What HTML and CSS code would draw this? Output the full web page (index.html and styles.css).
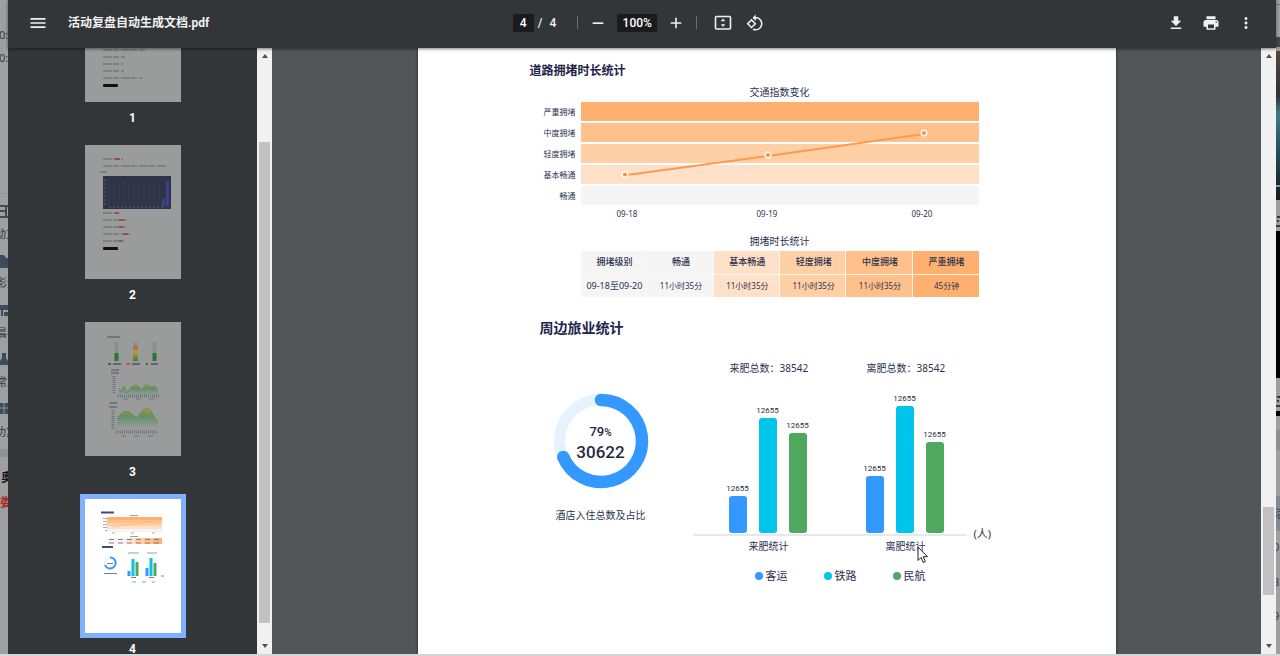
FILE: index.html
```html
<!DOCTYPE html>
<html lang="zh-CN">
<head>
    <meta charset="UTF-8">
    <meta name="viewport" content="width=device-width, initial-scale=1.0">
    <title>活动复盘自动生成文档.pdf</title>
    <link rel="stylesheet" href="styles.css">
</head>
<body>
    <!-- page behind the viewer, left edge -->
    <div class="edge edge-left">
        <svg width="8" height="656" viewBox="0 0 8 656">
            <g class="edge-text">
                <text x="-1" y="39">0:</text>
                <text x="-1" y="62">0:</text>
                <text x="-5" y="238">动文</text>
                <text x="-4" y="287">影沟</text>
                <text x="-4" y="337">晨模</text>
                <text x="-4" y="386">常重</text>
                <text x="-5" y="436">功复</text>
            </g>
            <rect y="193" width="8" height="1" fill="#959595"/>
            <path d="M0 206h8M0 211h7M0 217h8M6 206v11" stroke="#3d4c5c" stroke-width="2" fill="none"/>
            <path d="M0 255h4l2 3h2v10H0z" fill="#3d4c5c"/>
            <path d="M0 305h8v5H0zM1 310h2v6H1zM4 312h4v4H4z" fill="#3d4c5c"/>
            <path d="M2 353h4v5l2 3v4H0v-4l2-3z" fill="#3d4c5c"/>
            <path d="M0 403h8v11H0z" fill="#3d4c5c"/>
            <path d="M0 408h8M4 403v11" stroke="#8b9197"/>
            <rect y="449" width="8" height="8" fill="#8e9196"/>
            <text class="edge-name" x="1" y="482">奥</text>
            <text class="edge-alert" x="0" y="507">娄</text>
        </svg>
    </div>

    <div class="viewer">
        <header class="toolbar">
            <div class="toolbar-start">
                <button class="icon-button" aria-label="菜单">
                    <svg width="20" height="20" viewBox="0 0 24 24"><path d="M3 18h18v-2H3zm0-5h18v-2H3zm0-7v2h18V6z"/></svg>
                </button>
                <h1>活动复盘自动生成文档.pdf</h1>
            </div>
            <div class="toolbar-center">
                <input class="page-input" type="text" value="4" aria-label="页码">
                <span class="slash">/</span>
                <span>4</span>
                <span class="divider"></span>
                <button class="icon-button" aria-label="缩小">
                    <svg width="16" height="16" viewBox="0 0 24 24"><path d="M4 11h16v2.500H4z"/></svg>
                </button>
                <input class="zoom-input" type="text" value="100%" aria-label="缩放">
                <button class="icon-button" aria-label="放大">
                    <svg width="16" height="16" viewBox="0 0 24 24"><path d="M20 13.200h-6.800V20h-2.400v-6.800H4v-2.400h6.800V4h2.400v6.800H20z"/></svg>
                </button>
                <span class="divider divider-second"></span>
                <button class="icon-button fit-button" aria-label="适合页面大小">
                    <svg width="18" height="16" viewBox="0 0 18 16">
                        <rect x="1.500" y="1.500" width="15" height="12.500" rx="1" fill="none" stroke="#f1f1f1" stroke-width="1.600"/>
                        <path d="M9 3.500l2.200 2.700H6.800zM9 12l2.200-2.700H6.800z"/>
                    </svg>
                </button>
                <button class="icon-button" aria-label="旋转">
                    <svg width="18" height="18" viewBox="0 0 24 24"><path d="M7.340 6.410L.860 12.900l6.490 6.480 6.490-6.480-6.500-6.490zM3.690 12.900l3.660-3.660L11 12.900l-3.660 3.660-3.650-3.660zm15.670-6.260C17.610 4.880 15.300 4 13 4V.760L8.760 5 13 9.240V6c1.790 0 3.580.680 4.950 2.050 2.730 2.730 2.730 7.170 0 9.900C16.580 19.320 14.790 20 13 20c-.970 0-1.940-.210-2.840-.610l-1.490 1.490C10.020 21.620 11.510 22 13 22c2.300 0 4.610-.880 6.360-2.640 3.520-3.510 3.520-9.210 0-12.720z"/></svg>
                </button>
            </div>
            <div class="toolbar-end">
                <button class="icon-button" aria-label="下载">
                    <svg width="18" height="18" viewBox="0 0 24 24"><path d="M19 9h-4V3H9v6H5l7 7zM5 18v2h14v-2z"/></svg>
                </button>
                <button class="icon-button" aria-label="打印">
                    <svg width="18" height="18" viewBox="0 0 24 24"><path d="M19 8H5c-1.660 0-3 1.340-3 3v6h4v4h12v-4h4v-6c0-1.660-1.340-3-3-3zm-3 11H8v-5h8v5zm3-7c-.550 0-1-.450-1-1s.450-1 1-1 1 .450 1 1-.450 1-1 1zm-1-9H6v4h12V3z"/></svg>
                </button>
                <button class="icon-button" aria-label="更多">
                    <svg width="18" height="18" viewBox="0 0 24 24"><path d="M12 8c1.100 0 2-.900 2-2s-.900-2-2-2-2 .900-2 2 .900 2 2 2zm0 2c-1.100 0-2 .900-2 2s.900 2 2 2 2-.900 2-2-.900-2-2-2zm0 6c-1.100 0-2 .900-2 2s.900 2 2 2 2-.900 2-2-.900-2-2-2z"/></svg>
                </button>
            </div>
        </header>

        <div class="main">
            <nav class="sidebar">
                <div class="thumbs">
                    <a class="thumb" href="#page1">
                        <svg width="96" height="134" viewBox="0 0 96 134">
                            <rect width="96" height="134" fill="#999c9b"/>
                            <path d="M18 82h42M18 89h22M18 96h20M18 103h21M18 110h39" stroke="#747877" stroke-width="1.500" stroke-dasharray="9 1 6 2"/>
                            <rect x="18" y="116" width="15" height="3" rx="1" fill="#111"/>
                        </svg>
                        <span>1</span>
                    </a>
                    <a class="thumb" href="#page2">
                        <svg width="96" height="134" viewBox="0 0 96 134">
                            <rect width="96" height="134" fill="#999c9b"/>
                            <path d="M18 14h20M18 21h63M15 27h7M18 68h18M18 75h24M18 82h23M18 89h27M18 96h21" stroke="#747877" stroke-width="1.500" stroke-dasharray="9 1 6 2"/>
                            <path d="M30 14h5M30 68h4M34 75h5M34 82h4M38 89h5M34 96h3" stroke="#a8383a" stroke-width="1.500"/>
                            <rect x="18" y="31" width="68" height="33" fill="#2f3547"/>
                            <path d="M24 36v24M29 36v24M34 36v24M39 36v24M44 36v24M49 36v24M54 36v24M59 36v24M64 36v24M69 36v24M74 36v24" stroke="#373e50"/>
                            <path d="M20 34v26M24 62h56" stroke="#5a6072" stroke-dasharray="2 2"/>
                            <path d="M82.500 36v25M78.500 54v7" stroke="#3c3f93" stroke-width="3"/>
                            <rect x="18" y="102" width="15" height="3" rx="1" fill="#111"/>
                        </svg>
                        <span>2</span>
                    </a>
                    <a class="thumb" href="#page3">
                        <svg width="96" height="134" viewBox="0 0 96 134">
                            <defs>
                                <linearGradient id="wave" x1="0" y1="0" x2="0" y2="1">
                                    <stop offset="0" stop-color="#b3983c"/>
                                    <stop offset=".4" stop-color="#5d9068"/>
                                    <stop offset="1" stop-color="#999c9b"/>
                                </linearGradient>
                                <linearGradient id="gauge" x1="0" y1="0" x2="0" y2="1">
                                    <stop offset="0" stop-color="#b8585a"/>
                                    <stop offset=".4" stop-color="#b3a03c"/>
                                    <stop offset="1" stop-color="#3f7c42"/>
                                </linearGradient>
                            </defs>
                            <rect width="96" height="134" fill="#999c9b"/>
                            <path d="M22 15h13M26 48h8M26 51h8M25 81h8M24 85h8" stroke="#4c5161"/>
                            <path d="M31.500 20v18M50.500 20v18M69.500 20v18" stroke="#8b8e8d" stroke-width="4"/>
                            <path d="M31.500 31v8M69.500 31v8" stroke="#2e7437" stroke-width="4"/>
                            <rect x="48" y="24" width="5" height="15" fill="url(#gauge)"/>
                            <path d="M28 42h8M47 42h8M66 42h7" stroke="#4c5161" stroke-width="1.500"/>
                            <path d="M23 42h3M61 42h2" stroke="#2e7437" stroke-width="2"/>
                            <path d="M41 42h4" stroke="#b8585a" stroke-width="2"/>
                            <path d="M34 72v-6l2 4 3-6 3 7 3-5 5-3 3 1 4 4 4-6 4 3 4-1 4 3v6z" fill="url(#wave)"/>
                            <path d="M34 66l2 4 3-6 3 7 3-5 5-3 3 1 4 4 4-6 4 3 4-1 4 3" stroke="#6c9150" fill="none"/>
                            <path d="M32 106V97q8-14 17-3l3 2q10-17 15-5l6 10v5z" fill="url(#wave)"/>
                            <path d="M32 97q8-14 17-3l3 2q10-17 15-5l6 10" stroke="#6c9150" fill="none"/>
                            <path d="M29 54v18M28 88v20M33 74h41M31 110h42" stroke="#6d7280" stroke-width="3" stroke-dasharray="1 1"/>
                            <path d="M38 77h5M51 77h5M64 77h5M36 114h5M49 114h5M63 114h5" stroke="#6d7280"/>
                        </svg>
                        <span>3</span>
                    </a>
                    <a class="thumb active" href="#page4">
                        <svg width="96" height="134" viewBox="0 0 96 134">
                            <rect width="96" height="134" fill="#fff"/>
                            <path d="M16 13.500h13M17 48h11" stroke="#454b68" stroke-width="2"/>
                            <path d="M45 16.500h8M45 37.500h8M43 54h11M62 54h10" stroke="#999eac"/>
                            <rect x="22" y="18" width="55" height="3" fill="#ffaf6e"/>
                            <rect x="22" y="21" width="55" height="3" fill="#ffc08b"/>
                            <rect x="22" y="24" width="55" height="3" fill="#ffcfa6"/>
                            <rect x="22" y="27" width="55" height="3" fill="#ffe0c8"/>
                            <rect x="22" y="30" width="55" height="3" fill="#f5f5f5"/>
                            <path d="M28 28l20-3 22-3" stroke="#ffae71" stroke-width=".6" fill="none"/>
                            <path d="M18 19.500h4M18 22.500h4M18 25.500h4M18 28.500h4M20 31.500h2M27 34h3M46 34h3M67 34h3" stroke="#a9adb8"/>
                            <rect x="22" y="39" width="19" height="6" fill="#f5f5f5"/>
                            <rect x="41" y="39" width="9" height="6" fill="#ffe0c8"/>
                            <rect x="50" y="39" width="9" height="6" fill="#ffcfa6"/>
                            <rect x="59" y="39" width="9" height="6" fill="#ffc08b"/>
                            <rect x="68" y="39" width="9" height="6" fill="#ffaf6e"/>
                            <path d="M24 40.500h52M24 44h52" stroke="#8a8084" stroke-dasharray="5 4"/>
                            <circle cx="25" cy="64" r="5.500" fill="none" stroke="#e6f3ff" stroke-width="2"/>
                            <path d="M25 58.500a5.500 5.500 0 1 1-5 7.500" fill="none" stroke="#3398ff" stroke-width="2"/>
                            <path d="M22 64.500h6M19 74.500h13M46 78.500h5M64 78.500h5M76 77h3" stroke="#777d8f"/>
                            <path d="M44 72v5M62 69v8" stroke="#3398ff" stroke-width="3"/>
                            <path d="M48 60v17M66 59v18" stroke="#00c5ea" stroke-width="3"/>
                            <path d="M52 63v14M70 64v13" stroke="#4fa85e" stroke-width="3"/>
                            <path d="M47 83h4M57 83h4M67 83h3" stroke="#86a5b6"/>
                        </svg>
                        <span>4</span>
                    </a>
                </div>
            </nav>
            <div class="scrollbar scrollbar-thumbs">
                <i class="arrow up"></i><i class="before"></i><i class="handle"></i><i class="after"></i><i class="arrow down"></i>
            </div>

            <main class="document">
                <article class="page" id="page4">
                    <h2>道路拥堵时长统计</h2>
                    <section class="traffic">
                        <h3>交通指数变化</h3>
                        <div class="levels">
                            <span>严重拥堵</span><span>中度拥堵</span><span>轻度拥堵</span><span>基本畅通</span><span>畅通</span>
                        </div>
                        <div class="bands">
                            <div class="level-5"></div>
                            <div class="level-4"></div>
                            <div class="level-3"></div>
                            <div class="level-2"></div>
                            <div class="level-1"></div>
                            <svg class="line" viewBox="0 0 398 103" preserveAspectRatio="none">
                                <path d="M46 73l141-19 156-22" fill="none" stroke="#ff9a4d" stroke-width="2"/>
                                <g fill="#ff8f3c" stroke="#fff" stroke-width="1.500">
                                    <circle cx="44" cy="72.500" r="2.800"/>
                                    <circle cx="187" cy="53" r="2.800"/>
                                    <circle cx="343" cy="31" r="2.800"/>
                                </g>
                            </svg>
                        </div>
                        <div class="dates"><span>09-18</span><span>09-19</span><span>09-20</span></div>
                        <h3 class="table-title">拥堵时长统计</h3>
                        <table>
                            <tr>
                                <th class="level-1">拥堵级别</th>
                                <th class="level-1">畅通</th>
                                <th class="level-2">基本畅通</th>
                                <th class="level-3">轻度拥堵</th>
                                <th class="level-4">中度拥堵</th>
                                <th class="level-5">严重拥堵</th>
                            </tr>
                            <tr>
                                <td class="level-1 range">09-18至09-20</td>
                                <td class="level-1">11小时35分</td>
                                <td class="level-2">11小时35分</td>
                                <td class="level-3">11小时35分</td>
                                <td class="level-4">11小时35分</td>
                                <td class="level-5">45分钟</td>
                            </tr>
                        </table>
                    </section>

                    <h2 class="hotel-title">周边旅业统计</h2>
                    <section class="hotel">
                        <figure class="donut">
                            <div class="ring">
                                <svg width="94" height="96" viewBox="0 0 94 96">
                                    <circle cx="47" cy="48" r="41.500" fill="none" stroke="#e6f3ff" stroke-width="11"/>
                                    <path d="M47 7A41 41 0 1 1 9.260 64" fill="none" stroke="#3398ff" stroke-width="12.500" stroke-linecap="round"/>
                                </svg>
                                <div class="ring-text">
                                    <span class="percent">79<small>%</small></span>
                                    <strong>30622</strong>
                                </div>
                            </div>
                            <figcaption>酒店入住总数及占比</figcaption>
                        </figure>

                        <div class="passengers">
                            <div class="groups">
                                <div class="group">
                                    <p>来肥总数<span class="colon">：</span>38542</p>
                                    <div class="bars">
                                        <div class="bar"><span>12655</span><i class="bus" style="height: 37px"></i></div>
                                        <div class="bar"><span>12655</span><i class="rail" style="height: 115px"></i></div>
                                        <div class="bar"><span>12655</span><i class="air" style="height: 100px"></i></div>
                                    </div>
                                    <p class="group-name">来肥统计</p>
                                </div>
                                <div class="group">
                                    <p>离肥总数<span class="colon">：</span>38542</p>
                                    <div class="bars">
                                        <div class="bar"><span>12655</span><i class="bus" style="height: 57px"></i></div>
                                        <div class="bar"><span>12655</span><i class="rail" style="height: 127px"></i></div>
                                        <div class="bar"><span>12655</span><i class="air" style="height: 91px"></i></div>
                                    </div>
                                    <p class="group-name">离肥统计</p>
                                </div>
                            </div>
                            <div class="legend">
                                <span><i class="bus"></i>客运</span>
                                <span><i class="rail"></i>铁路</span>
                                <span><i class="air"></i>民航</span>
                            </div>
                        </div>
                        <span class="unit">(人)</span>
                    </section>
                </article>
            </main>
            <div class="scrollbar scrollbar-document">
                <i class="arrow up"></i><i class="before"></i><i class="handle"></i><i class="after"></i><i class="arrow down"></i>
            </div>
        </div>
    </div>

    <!-- page behind the viewer, right edge -->
    <div class="edge edge-right">
        <svg width="4" height="656" viewBox="0 0 4 656">
            <defs>
                <linearGradient id="photo" x1="0" y1="0" x2="0" y2="1">
                    <stop offset="0" stop-color="#5a4537"/>
                    <stop offset=".3" stop-color="#2b3238"/>
                    <stop offset=".42" stop-color="#3f7d86"/>
                    <stop offset=".6" stop-color="#2b5a63"/>
                    <stop offset="1" stop-color="#141a22"/>
                </linearGradient>
            </defs>
            <rect y="4" width="4" height="1" fill="#78756a"/>
            <rect y="37" width="4" height="10" fill="#3f4658"/>
            <rect y="51" width="4" height="149" fill="url(#photo)"/>
            <rect y="185" width="4" height="2" fill="#8d9499"/>
            <path d="M1 217h3M1 221h2M0 226h4" stroke="#30384c" stroke-width="2"/>
            <rect y="231" width="4" height="147" fill="#000"/>
            <path d="M1 397h3M1 401h2M0 406h4" stroke="#30384c" stroke-width="2"/>
            <rect y="411" width="4" height="5" fill="#000"/>
            <rect y="430" width="4" height="20" fill="#8f8f8c"/>
            <rect y="496" width="4" height="35" fill="#838b90"/>
            <g class="edge-text">
                <text x="-2" y="518">活</text>
                <text x="-3" y="551">0</text>
                <text x="-3" y="586">8</text>
                <text x="-3" y="620">9</text>
            </g>
        </svg>
    </div>

    <svg class="cursor" width="12" height="18" viewBox="0 0 12 18">
        <path d="M1 1v13.500l3-3 2.200 5 2.200-1-2.200-4.800h4.300z" fill="#fff" stroke="#222" stroke-width="1"/>
    </svg>
</body>
</html>
```

FILE: styles.css
```css
* {
    box-sizing: border-box;
}

body {
    margin: 0;
    height: 100vh;
    display: flex;
    overflow: hidden;
    position: relative;
    border-bottom: 2px solid #d5d5d5;
    background-color: #9f9f9f;
    font-family: "Noto Sans", "Noto Sans CJK SC", sans-serif;
    color: #2b3350;
}

h1, h2, h3, p, figure {
    margin: 0;
}

.edge {
    flex: none;
    overflow: hidden;
    background-color: #9f9f9f;
}

.edge-left {
    width: 8px;
}

.edge-right {
    width: 4px;
}

.edge svg {
    display: block;
}

.edge-text {
    font-size: 11px;
    fill: #30384c;
}

.edge-name {
    font-size: 12px;
    font-weight: bold;
    fill: #10142c;
}

.edge-alert {
    font-size: 12px;
    font-weight: bold;
    fill: #b02a22;
}

.viewer {
    flex: 1;
    min-width: 0;
    display: flex;
    flex-direction: column;
}

/* toolbar */
.toolbar {
    flex: none;
    height: 48px;
    display: grid;
    grid-template-columns: 1fr auto 1fr;
    align-items: center;
    padding: 0 21px 3px 20px;
    background-color: #323639;
    color: #f1f1f1;
    font-family: Roboto, "Noto Sans CJK SC", sans-serif;
    font-size: 12px;
    font-weight: 500;
    box-shadow: 0 1px 3px rgba(0, 0, 0, 0.5);
    z-index: 1;
}

.toolbar-start,
.toolbar-center,
.toolbar-end {
    display: flex;
    align-items: center;
}

.toolbar-start {
    gap: 20px;
}

.toolbar-center {
    margin-right: 6px;
}

.toolbar-end {
    justify-content: flex-end;
    gap: 17px;
}

.toolbar h1 {
    font-size: 12px;
    font-weight: bold;
    line-height: 18px;
    white-space: nowrap;
}

.icon-button {
    display: flex;
    padding: 0;
    border: none;
    background: none;
    cursor: pointer;
}

.icon-button svg {
    fill: #f1f1f1;
}

.toolbar input {
    height: 18px;
    padding: 0;
    border: none;
    background-color: #191b1c;
    color: #fff;
    font: inherit;
    text-align: center;
}

.page-input {
    width: 21px;
}

.zoom-input {
    width: 40px;
    margin: 0 11px;
}

.slash {
    margin: 0 7px 0 4px;
}

.divider {
    width: 1px;
    height: 13px;
    margin: 0 12px 0 21px;
    background-color: #6b6e70;
}

.divider-second {
    margin: 0 17px 0 12px;
}

.fit-button {
    margin-right: 14px;
}

.main {
    flex: 1;
    min-height: 0;
    display: flex;
}

/* thumbnails */
.sidebar {
    flex: none;
    width: 249px;
    overflow: hidden;
    background-color: #323639;
}

.thumbs {
    margin-top: -80px;
    display: flex;
    flex-direction: column;
    align-items: center;
}

.thumb {
    height: 177px;
    display: flex;
    flex-direction: column;
    align-items: center;
    gap: 7px;
    color: #fff;
    font-family: Roboto, sans-serif;
    font-size: 12px;
    font-weight: bold;
    line-height: 18px;
    text-decoration: none;
}

.thumb svg {
    display: block;
    flex: none;
}

.thumb.active svg {
    outline: 5px solid #80b0fb;
}

/* scrollbars */
.scrollbar {
    flex: none;
    width: 15px;
    display: flex;
    flex-direction: column;
    align-items: center;
    background-color: #f1f1f1;
}

.scrollbar .arrow {
    flex: none;
    height: 16px;
    display: flex;
    align-items: center;
}

.arrow::before {
    content: "";
    border: 3px solid transparent;
}

.arrow.up::before {
    border-top: none;
    border-bottom: 4px solid #505050;
}

.arrow.down::before {
    border-bottom: none;
    border-top: 4px solid #505050;
}

.handle {
    width: 11px;
    background-color: #c1c1c1;
}

.scrollbar-thumbs .before {
    flex: 78;
}

.scrollbar-thumbs .handle {
    flex: 481;
}

.scrollbar-thumbs .after {
    flex: 15;
}

.scrollbar-document .before {
    flex: 443;
}

.scrollbar-document .handle {
    flex: 88;
}

.scrollbar-document .after {
    flex: 43;
}

/* document */
.document {
    flex: 1;
    min-width: 0;
    display: flex;
    justify-content: center;
    background-color: #525659;
}

.page {
    flex: 0 1 698px;
    padding: 13px 112px 0;
    background-color: #fff;
    box-shadow: 0 0 3px rgba(0, 0, 0, 0.6);
    line-height: 20px;
    overflow: hidden;
}

h2 {
    font-size: 12px;
    line-height: 20px;
    color: #1d2549;
}

h3 {
    grid-column: 2;
    font-size: 10px;
    font-weight: normal;
    line-height: 20px;
    text-align: center;
}

.traffic {
    display: grid;
    grid-template-columns: 46px 1fr;
    column-gap: 5px;
    margin: 1px 25px 0 0;
}

.levels,
.bands {
    display: grid;
    grid-auto-rows: 19px;
    row-gap: 2px;
}

.levels {
    font-size: 8px;
    line-height: 19px;
    text-align: right;
}

.bands {
    position: relative;
}

.line {
    position: absolute;
    width: 100%;
    height: 100%;
    overflow: visible;
}

.level-1 { background-color: #f5f5f5; }
.level-2 { background-color: #ffe0c8; }
.level-3 { background-color: #ffcfa6; }
.level-4 { background-color: #ffc08b; }
.level-5 { background-color: #ffaf6e; }

.dates {
    grid-column: 2;
    display: grid;
    grid-template-columns: 140px 155px auto;
    padding-left: 36px;
    font-size: 8px;
    line-height: 18px;
}

.table-title {
    margin-top: 8px;
}

table {
    grid-column: 2;
    width: 100%;
    table-layout: fixed;
    border-collapse: collapse;
}

th,
td {
    height: 23px;
    padding: 0 0 0 2px;
    border-left: 1px solid #fff6ee;
    font-size: 8px;
    line-height: 22px;
    text-align: center;
    white-space: nowrap;
}

th {
    border-bottom: 1px solid #fff6ee;
    font-size: 9px;
    font-weight: 500;
}

th:first-child,
td:first-child {
    border-left: none;
}

.range {
    font-size: 9px;
}

.hotel-title {
    margin: 21px 0 0 10px;
    font-size: 14px;
}

.hotel {
    display: flex;
    margin-top: 20px;
    padding-left: 24px;
    font-size: 10px;
}

.donut {
    flex: none;
    margin-top: 35px;
    text-align: center;
}

.ring {
    display: grid;
    margin-bottom: 16px;
}

.ring svg,
.ring-text {
    grid-area: 1 / 1;
}

.ring svg {
    overflow: visible;
}

.ring-text {
    display: flex;
    flex-direction: column;
    align-items: center;
    justify-content: center;
    color: #1f2b3d;
    font-family: Roboto, sans-serif;
}

.percent {
    font-size: 13px;
    font-weight: 500;
    line-height: 20px;
}

.percent small {
    font-size: 10px;
}

.ring-text strong {
    font-size: 17px;
    font-weight: 500;
    line-height: 18px;
}

.passengers {
    flex: 0 1 274px;
    margin-left: 45px;
}

.groups {
    display: flex;
}

.group {
    flex: 1;
}

.group p {
    padding-left: 37px;
    white-space: nowrap;
}

.group .group-name {
    padding-left: 56px;
}

/* the TC face centres the fullwidth colon */
.colon {
    font-family: "Noto Sans CJK TC", sans-serif;
    line-height: 1;
}

.bars {
    height: 158px;
    display: flex;
    align-items: flex-end;
    gap: 12px;
    padding: 0 0 1px 36px;
    border-bottom: 2px solid #e8e8e8;
}

.bar {
    width: 18px;
    display: flex;
    flex-direction: column;
    align-items: center;
    color: #1f2b3d;
    font-family: Roboto, sans-serif;
    font-size: 8px;
    line-height: 15px;
}

.bar i {
    width: 18px;
    border-radius: 3px;
}

.bus { background-color: #3398ff; }
.rail { background-color: #00c5ea; }
.air { background-color: #4fa85e; }

.legend {
    display: flex;
    gap: 36px;
    margin-top: 10px;
    padding-left: 62px;
    font-size: 11px;
}

.legend span {
    display: flex;
    align-items: center;
    gap: 3px;
    white-space: nowrap;
}

.legend i {
    width: 8px;
    height: 8px;
    border-radius: 50%;
}

.unit {
    margin: 166px 0 0 7px;
    font-size: 11px;
    white-space: nowrap;
}

.cursor {
    position: absolute;
    left: 917px;
    top: 546px;
}
```
